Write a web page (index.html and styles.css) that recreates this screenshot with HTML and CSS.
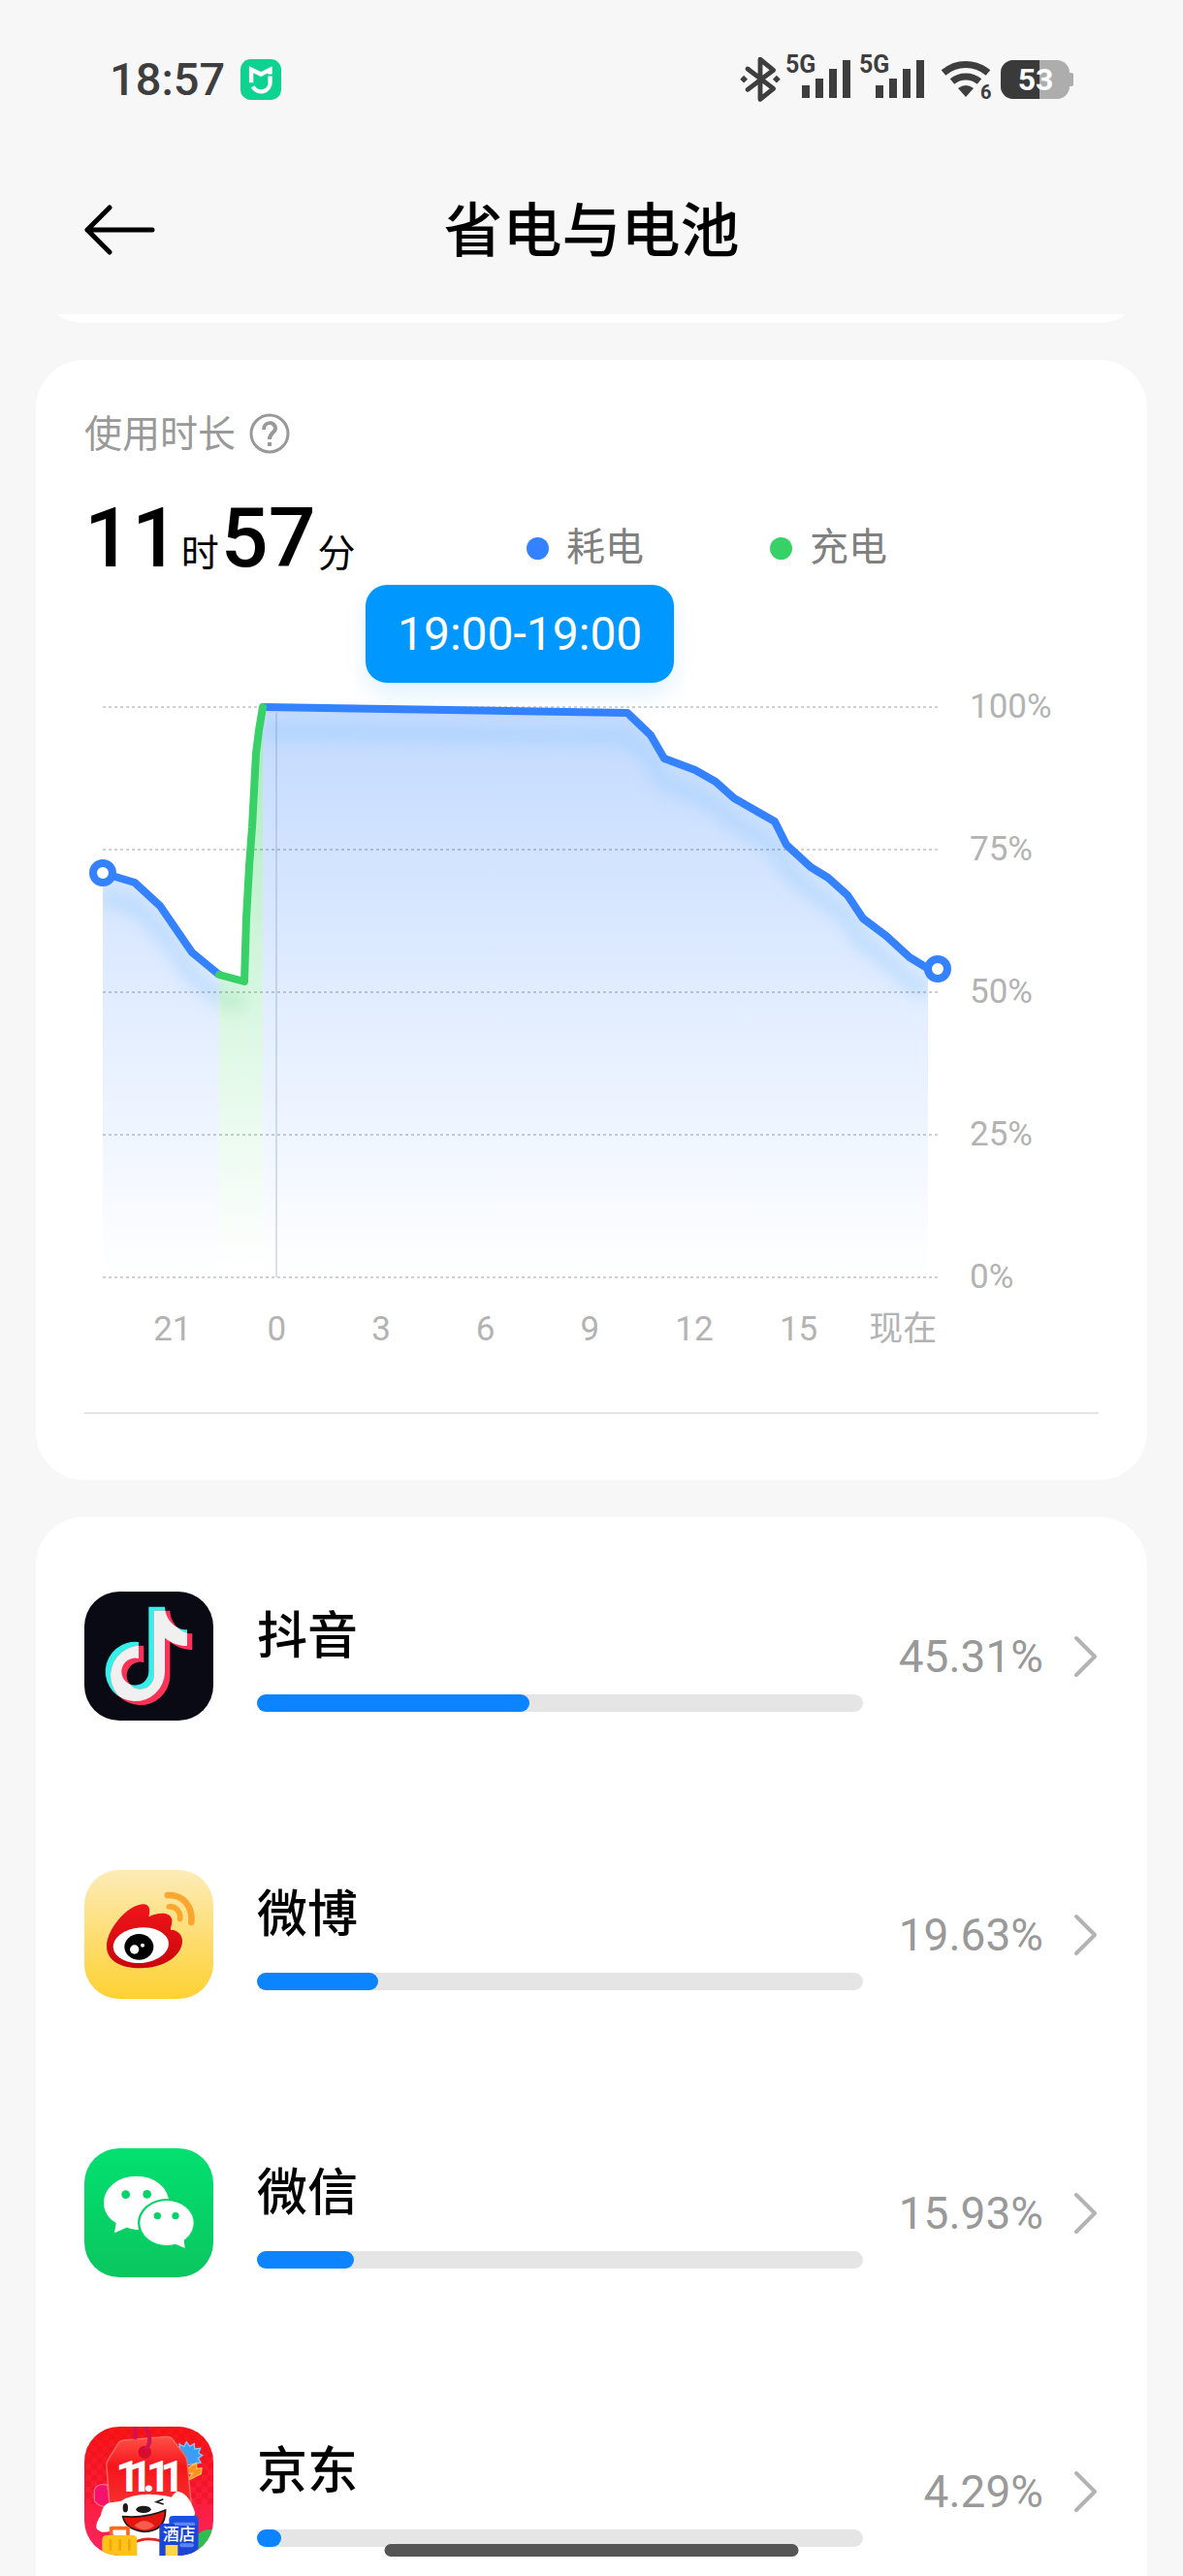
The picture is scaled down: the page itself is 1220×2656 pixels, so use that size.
FILE: index.html
```html
<!DOCTYPE html>
<html lang="zh-CN">
<head>
    <meta charset="UTF-8">
    <meta name="viewport" content="width=device-width, initial-scale=1.0">
    <title>省电与电池</title>
    <link rel="stylesheet" href="styles.css">
</head>
<body>

    <div class="status-bar">
        <span class="clock">18:57</span>
        <svg class="mi-icon" viewBox="565 96 125 125">
            <rect x="565" y="96" width="125" height="125" rx="32" fill="#0ed28f"/>
            <path d="M598 168V128L628 142L656 128V142" fill="none" stroke="#fff" stroke-width="13"/>
            <path d="M656 148V166A28 28 0 0 1 603 180" fill="none" stroke="#fff" stroke-width="13"/>
        </svg>
        <div class="status-icons">
            <svg class="bluetooth" viewBox="60 54 132 148">
                <path d="M86 94L168 157L126 191V64L168 98L86 160" fill="none" stroke="#3e3e3e" stroke-width="15" stroke-linejoin="round" stroke-linecap="round"/>
                <path d="M74 115L86 127L74 139L62 127ZM178 115L190 127L178 139L166 127Z" fill="#3e3e3e"/>
            </svg>
            <svg class="signal" viewBox="0 -10 68 70">
                <text x="0" y="18">5G</text>
                <path d="M17 31h8v13h-8zM31 24h8v20h-8zM45 14h8v30h-8zM59 5h8v39h-8z"/>
            </svg>
            <svg class="signal" viewBox="0 -10 68 70">
                <text x="0" y="18">5G</text>
                <path d="M17 31h8v13h-8zM31 24h8v20h-8zM45 14h8v30h-8zM59 5h8v39h-8z"/>
            </svg>
            <svg class="wifi" viewBox="0 -5 54 60">
                <path d="M3 18A35 35 0 0 1 49 18" fill="none" stroke="#3e3e3e" stroke-width="7"/>
                <path d="M12 27A22 22 0 0 1 40 27" fill="none" stroke="#3e3e3e" stroke-width="7"/>
                <path d="M18 34Q26 28 34 34L26 43Z" fill="#3e3e3e"/>
                <text x="41" y="45">6</text>
            </svg>
            <svg class="battery" viewBox="0 0 76 42">
                <clipPath id="cell"><rect x="0" y="1" width="71" height="40" rx="13"/></clipPath>
                <rect x="0" y="1" width="71" height="40" rx="13" fill="#adadad"/>
                <rect x="70" y="14" width="5" height="14" rx="2" fill="#adadad"/>
                <rect x="0" y="1" width="40" height="40" fill="#3a3a3a" clip-path="url(#cell)"/>
                <text x="36" y="32" text-anchor="middle">53</text>
            </svg>
        </div>
    </div>

    <header class="top-bar">
        <button class="back" aria-label="返回">
            <svg viewBox="0 0 76 56">
                <path d="M27 5L4 28L27 51M4 28H71" fill="none" stroke="#000" stroke-width="5" stroke-linecap="round" stroke-linejoin="round"/>
            </svg>
        </button>
        <h1>省电与电池</h1>
    </header>

    <div class="peek"><div class="peek-card"></div></div>

    <main>
        <section class="card usage">
            <div class="usage-title">
                <h2>使用时长</h2>
                <button class="help" aria-label="说明">
                    <svg viewBox="0 0 42 42">
                        <circle cx="21" cy="21" r="19" fill="none" stroke="#999" stroke-width="3"/>
                        <path d="M15 17C15 8 27 8 27 16C27 20 21 20 21 27" fill="none" stroke="#999" stroke-width="4"/>
                        <rect x="19" y="30" width="4" height="4" fill="#999"/>
                    </svg>
                </button>
            </div>

            <div class="summary">
                <p class="duration"><b>11</b><span>时</span><b>57</b><span>分</span></p>
                <ul class="legend">
                    <li class="drain">耗电</li>
                    <li class="charge">充电</li>
                </ul>
            </div>

            <div class="chart">
                <div class="tooltip">19:00-19:00</div>
                <svg class="plot" viewBox="0 0 861 588">
                    <defs>
                        <linearGradient id="blueFill" x1="0" y1="0" x2="0" y2="588" gradientUnits="userSpaceOnUse">
                            <stop offset="0" stop-color="#3482ff" stop-opacity=".3"/>
                            <stop offset="1" stop-color="#3482ff" stop-opacity="0"/>
                        </linearGradient>
                        <linearGradient id="greenFill" x1="0" y1="0" x2="0" y2="588" gradientUnits="userSpaceOnUse">
                            <stop offset="0" stop-color="#38d167" stop-opacity=".45"/>
                            <stop offset="1" stop-color="#5fe080" stop-opacity="0"/>
                        </linearGradient>
                        <filter id="soft" filterUnits="userSpaceOnUse" x="-40" y="-40" width="940" height="660"><feGaussianBlur stdDeviation="8"/></filter>
                        <clipPath id="under">
                            <path d="M0 171L33 181L59 205L92 253L120 276L146 283L151 164L158 48L165 0L541 6L565 29L579 53L611 65L632 77L651 94L693 118L705 142L730 165L748 176L768 194L784 218L808 236L832 258L851 269V588H0Z"/>
                        </clipPath>
                    </defs>

                    <path d="M0 171L33 181L59 205L92 253L120 276V588H0Z" fill="url(#blueFill)"/>
                    <path d="M120 276L146 283L151 164L158 48L165 0V588H120Z" fill="url(#greenFill)"/>
                    <path d="M165 0L541 6L565 29L579 53L611 65L632 77L651 94L693 118L705 142L730 165L748 176L768 194L784 218L808 236L832 258L851 269V588H165Z" fill="url(#blueFill)"/>

                    <!-- soft glow below the line -->
                    <g clip-path="url(#under)" fill="none" stroke-width="16">
                        <g filter="url(#soft)" stroke="#8ec8fb" stroke-opacity=".38">
                            <path d="M0 195L33 205L59 229L92 277L120 300"/>
                            <path d="M165 25L541 31L565 54L579 78L611 90L632 102L651 119L693 143L705 167L730 190L748 201L768 219L784 243L808 261L832 283L851 294"/>
                        </g>
                        <path d="M120 300L146 307" stroke="#7ddc9a" stroke-opacity=".3" filter="url(#soft)"/>
                    </g>

                    <path class="grid-line" d="M0 0H861M0 147H861M0 294H861M0 441H861M0 588H861"/>
                    <path d="M179 6V588" stroke="#5a78aa" stroke-opacity=".22" stroke-width="2"/>

                    <path class="line blue" d="M0 171L33 181L59 205L92 253L120 276"/>
                    <path class="line blue" d="M165 0L541 6L565 29L579 53L611 65L632 77L651 94L693 118L705 142L730 165L748 176L768 194L784 218L808 236L832 258L850 269L861 270"/>
                    <path class="line green" d="M120 276L146 283L148 218L151 164L154 124L158 48L161 24L165 0"/>
                    <circle class="dot" cx="0" cy="171" r="10"/>
                    <circle class="dot" cx="861" cy="270" r="10"/>
                </svg>
                <div class="y-axis">
                    <span>100%</span>
                    <span>75%</span>
                    <span>50%</span>
                    <span>25%</span>
                    <span>0%</span>
                </div>
                <div class="x-axis">
                    <span>21</span>
                    <span>0</span>
                    <span>3</span>
                    <span>6</span>
                    <span>9</span>
                    <span>12</span>
                    <span>15</span>
                    <span>现在</span>
                </div>
            </div>
            <hr>
        </section>

        <section class="card apps">
            <a class="app" href="#">
                <svg class="app-icon" viewBox="51 63 399 399">
                    <defs>
                        <path id="note" d="M250 110H300C302 150 332 181 369 181V231C343 231 319 222 300 206V311A92 92 0 1 1 219 219V270A42 42 0 1 0 250 311Z"/>
                        <clipPath id="noteClip"><use href="#note"/></clipPath>
                    </defs>
                    <rect x="51" y="63" width="399" height="399" fill="#090a14"/>
                    <use href="#note" fill="#32f1ea"/>
                    <use href="#note" x="16" y="12" fill="#fb3158"/>
                    <g clip-path="url(#noteClip)"><use href="#note" x="16" y="12" fill="#f0f0f0"/></g>
                </svg>
                <div class="app-info">
                    <span class="app-name">抖音</span>
                    <div class="track"><div class="fill" style="width: 45%"></div></div>
                </div>
                <span class="percent">45.31%</span>
                <svg class="chevron" viewBox="0 0 26 44"><path d="M3 3L22 22L3 41"/></svg>
            </a>

            <a class="app" href="#">
                <svg class="app-icon" viewBox="51 54 399 399">
                    <defs>
                        <linearGradient id="weiboBg" x2="0" y2="1">
                            <stop offset="0" stop-color="#fdebb8"/>
                            <stop offset="1" stop-color="#fed132"/>
                        </linearGradient>
                        <linearGradient id="weiboRed" x2="0" y2="1">
                            <stop offset="0" stop-color="#f0151b"/>
                            <stop offset="1" stop-color="#c8070b"/>
                        </linearGradient>
                    </defs>
                    <rect x="51" y="54" width="399" height="399" fill="url(#weiboBg)"/>
                    <path d="M120 290C120 240 180 166 230 160C252 158 257 176 250 199C280 184 314 184 321 205C325 220 317 230 318 239C340 240 356 255 354 277C350 325 290 358 225 358C165 358 120 335 120 290Z" fill="url(#weiboRed)"/>
                    <ellipse cx="226" cy="287" rx="86" ry="55" fill="#fff" transform="rotate(-5 226 287)"/>
                    <ellipse cx="220" cy="292" rx="45" ry="40"/>
                    <circle cx="206" cy="300" r="14" fill="#fff"/>
                    <circle cx="231" cy="287" r="6" fill="#fff"/>
                    <path d="M309 132C355 130 387 165 382 216" fill="none" stroke="#fda62e" stroke-width="20" stroke-linecap="round"/>
                    <path d="M313 168C334 166 350 184 347 206" fill="none" stroke="#fda62e" stroke-width="17" stroke-linecap="round"/>
                </svg>
                <div class="app-info">
                    <span class="app-name">微博</span>
                    <div class="track"><div class="fill" style="width: 20%"></div></div>
                </div>
                <span class="percent">19.63%</span>
                <svg class="chevron" viewBox="0 0 26 44"><path d="M3 3L22 22L3 41"/></svg>
            </a>

            <a class="app" href="#">
                <svg class="app-icon" viewBox="51 74 399 399">
                    <defs>
                        <linearGradient id="wechatBg" x2="0" y2="1">
                            <stop offset="0" stop-color="#02e06f"/>
                            <stop offset="1" stop-color="#0bc65f"/>
                        </linearGradient>
                    </defs>
                    <rect x="51" y="74" width="399" height="399" fill="url(#wechatBg)"/>
                    <path d="M150 300L144 336L182 319Z" fill="#fff"/>
                    <path d="M212 160C268 160 313 196 313 243C313 290 268 326 212 326Q194 324 178 318Q111 296 111 243C111 196 156 160 212 160Z" fill="#fff"/>
                    <ellipse cx="306" cy="305" rx="90" ry="75" fill="#06d367"/>
                    <ellipse cx="306" cy="305" rx="83" ry="69" fill="#fff"/>
                    <path d="M328 368L362 383L358 348Z" fill="#fff"/>
                    <g fill="#06d367">
                        <circle cx="179" cy="217" r="13"/>
                        <circle cx="245" cy="216" r="13"/>
                        <circle cx="277" cy="283" r="11"/>
                        <circle cx="333" cy="283" r="11"/>
                    </g>
                </svg>
                <div class="app-info">
                    <span class="app-name">微信</span>
                    <div class="track"><div class="fill" style="width: 16%"></div></div>
                </div>
                <span class="percent">15.93%</span>
                <svg class="chevron" viewBox="0 0 26 44"><path d="M3 3L22 22L3 41"/></svg>
            </a>

            <a class="app" href="#">
                <svg class="app-icon" viewBox="51 66 399 399">
                    <defs>
                        <pattern id="check" width="36" height="36" patternUnits="userSpaceOnUse">
                            <path d="M0 0h18v18h-18zM18 18h18v18h-18z" fill="#e8101f" fill-opacity=".55"/>
                        </pattern>
                        <linearGradient id="jdBg" x2="0" y2="1">
                            <stop offset="0" stop-color="#fa1411"/>
                            <stop offset="1" stop-color="#fb2560"/>
                        </linearGradient>
                        <linearGradient id="jdTag" x2="0" y2="1">
                            <stop offset="0" stop-color="#ff5148"/>
                            <stop offset=".4" stop-color="#f5151b"/>
                            <stop offset="1" stop-color="#f93434"/>
                        </linearGradient>
                    </defs>
                    <rect x="51" y="66" width="399" height="399" fill="url(#jdBg)"/>
                    <rect x="51" y="66" width="399" height="240" fill="url(#check)"/>
                    <path d="M82 262Q90 240 122 246L130 312Q100 318 82 296Z" fill="#f5126c" stroke="#fb6591" stroke-width="4"/>
                    <path d="M345 120l14 8 8-15 10 14 14-8 1 16 18-2-6 15 12 7-13 9 8 14-20 3-20 4-20-8z" fill="#3b9df5" stroke="#8cc5f5" stroke-width="4"/>
                    <path d="M398 178L372 193L368 212L386 211L368 234L412 212L414 194L398 196Z" fill="#fd9125" stroke="#ffc34d" stroke-width="4"/>
                    <path d="M155 118Q160 110 172 108L305 97Q318 96 325 106L362 155Q368 164 369 176L384 330L130 320L120 190Q119 178 124 170Z" fill="url(#jdTag)" stroke="#ff6c60" stroke-width="4"/>
                    <circle cx="238" cy="145" r="20" fill="#d80c2e"/>
                    <path d="M208 66V106M238 66Q268 110 238 140" fill="none" stroke="#d3124f" stroke-width="12"/>
                    <text class="jd-sale" x="148 186 232 242 286" y="268">11.11</text>
                    <path d="M400 400Q424 380 450 385V465H400Z" fill="#2fbf4f"/>
                    <path d="M140 300Q108 300 102 340Q86 364 88 380Q100 398 130 390Q160 420 195 465H330L380 345Q400 345 390 322Q370 268 338 266Q330 270 320 284Q220 262 164 296Z" fill="#fff"/>
                    <path d="M205 425Q240 405 290 420" fill="none" stroke="#e2231a" stroke-width="8"/>
                    <path d="M170 344Q240 350 302 324Q302 390 236 391Q178 385 170 344Z" fill="#e2160f" stroke="#1b1b1b" stroke-width="5"/>
                    <path d="M205 372Q236 344 268 372Q238 398 205 372Z" fill="#fb5a4e"/>
                    <ellipse cx="178" cy="317" rx="8" ry="14" fill="#1b1b1b"/>
                    <ellipse cx="234" cy="322" rx="23" ry="11" fill="#1b1b1b"/>
                    <path d="M295 290L274 299L296 306" fill="none" stroke="#1b1b1b" stroke-width="5"/>
                    <path d="M134 404V380H186V404" fill="none" stroke="#fb6a1c" stroke-width="11" stroke-linejoin="round"/>
                    <rect x="106" y="402" width="108" height="80" rx="14" fill="#fdc21b"/>
                    <path d="M132 418V446M161 418V446M190 418V446" stroke="#f3a500" stroke-width="8" stroke-linecap="round"/>
                    <path d="M313 354Q313 342 325 342H392Q404 342 404 354V440L386 465H313Z" fill="#1f4fe0"/>
                    <path d="M330 368H388" stroke="#5b86f5" stroke-width="12" stroke-linecap="round"/>
                    <path d="M283 378Q283 366 295 366H330V372H400V440L386 465H283Z" fill="#1c45d8"/>
                    <rect x="302" y="432" width="38" height="34" fill="#fbd648"/>
                    <path d="M352 433H384" stroke="#5b86f5" stroke-width="12" stroke-linecap="round"/>
                    <text class="jd-hotel" x="294" y="418">酒店</text>
                </svg>
                <div class="app-info">
                    <span class="app-name">京东</span>
                    <div class="track"><div class="fill" style="width: 4%"></div></div>
                </div>
                <span class="percent">4.29%</span>
                <svg class="chevron" viewBox="0 0 26 44"><path d="M3 3L22 22L3 41"/></svg>
            </a>
        </section>
    </main>

    <div class="home-indicator"></div>

</body>
</html>
```
FILE: styles.css
```css
* {
    margin: 0;
    padding: 0;
    box-sizing: border-box;
}

body {
    display: flex;
    flex-direction: column;
    min-height: 100vh;
    background: #f7f7f7;
    color: #000;
    font-family: Roboto, "Noto Sans CJK SC", sans-serif;
}

svg {
    display: block;
    flex-shrink: 0;
}

button {
    border: none;
    background: none;
    cursor: pointer;
}

/* status bar */
.status-bar {
    display: flex;
    align-items: center;
    height: 164px;
    padding: 0 112px 0 113px;
}

.clock {
    font-size: 47px;
    font-weight: 500;
    line-height: 60px;
    color: #3e3e3e;
}

.mi-icon {
    width: 42px;
    height: 42px;
    margin-left: 16px;
}

.status-icons {
    display: flex;
    align-items: center;
    gap: 8px;
    margin-left: auto;
}

.bluetooth {
    width: 44px;
    height: 48px;
    margin-right: -4px;
}

.signal {
    width: 68px;
    height: 70px;
    fill: #3e3e3e;
    font-size: 25px;
    font-weight: 700;
}

.wifi {
    width: 54px;
    height: 60px;
    margin-left: 8px;
    fill: #3e3e3e;
    font-size: 20px;
    font-weight: 700;
}

.battery {
    width: 76px;
    height: 42px;
    fill: #fff;
    font-size: 32px;
    font-weight: 700;
}

/* header */
.top-bar {
    display: grid;
    grid-template-columns: 76px 1fr 76px;
    align-items: center;
    height: 160px;
    padding: 0 86px 14px;
}

.back svg {
    width: 76px;
    height: 56px;
}

h1 {
    padding-bottom: 8px;
    text-align: center;
    font-size: 61px;
    font-weight: 500;
}

/* bottom edge of the card scrolled under the header */
.peek {
    display: flex;
    align-items: flex-end;
    height: 9px;
    margin: 0 37px 38px;
    overflow: hidden;
}

.peek-card {
    flex: 1;
    height: 110px;
    border-radius: 50px;
    background: #fff;
}

main {
    flex: 1;
    display: flex;
    flex-direction: column;
    gap: 38px;
    margin: 0 37px;
}

.card {
    border-radius: 50px;
    background: #fff;
}

/* usage card */
.usage {
    padding: 51px 50px 68px;
}

.usage-title {
    display: flex;
    align-items: center;
    gap: 14px;
    height: 50px;
}

.usage-title h2 {
    padding-bottom: 6px;
    font-size: 39px;
    font-weight: 400;
    color: #999;
}

.help svg {
    width: 42px;
    height: 42px;
}

.summary {
    display: flex;
    justify-content: space-between;
    align-items: flex-end;
    height: 104px;
    margin-top: 31px;
}

.duration {
    display: flex;
    align-items: baseline;
    line-height: 104px;
}

.duration b {
    font-size: 86px;
    font-weight: 500;
}

.duration span {
    margin: 0 2px;
    font-size: 39px;
    font-weight: 400;
    line-height: 1;
}

.legend {
    display: flex;
    gap: 130px;
    margin: 0 218px 17px 0;
    list-style: none;
    font-size: 40px;
    line-height: 50px;
    color: #808080;
}

.legend li {
    display: flex;
    align-items: center;
    gap: 18px;
}

.legend li::before {
    content: "";
    width: 23px;
    height: 23px;
    border-radius: 50%;
    background: #3482ff;
}

.legend .charge::before {
    background: #38d167;
}

.chart {
    position: relative;
    display: grid;
    grid-template-columns: 1fr 133px;
    column-gap: 33px;
    row-gap: 33px;
    margin: 122px 0 64px 19px;
    font-size: 35px;
    line-height: 42px;
    color: #b3b3b3;
}

.plot {
    width: 100%;
    overflow: visible;
}

.grid-line {
    stroke: #000;
    stroke-opacity: .18;
    stroke-width: 2;
    stroke-dasharray: 3 3;
}

.line {
    fill: none;
    stroke-width: 8;
    stroke-linejoin: round;
}

.blue {
    stroke: #3482ff;
}

.green {
    stroke: #38d167;
    stroke-linecap: round;
}

.dot {
    fill: #fff;
    stroke: #3482ff;
    stroke-width: 8;
}

.y-axis {
    display: flex;
    flex-direction: column;
    justify-content: space-between;
    margin: -21px 0;
}

.x-axis {
    display: grid;
    grid-template-columns: repeat(8, 1fr);
    margin: 0 -18px 0 18px;
    text-align: center;
}

/* sits over the top of the chart */
.tooltip {
    position: absolute;
    top: -126px;
    left: 271px;
    padding: 0 33px;
    border-radius: 22px;
    background: #0098ff;
    box-shadow: 0 12px 24px rgba(0, 152, 255, .12);
    color: #fff;
    font-size: 48px;
    line-height: 101px;
    white-space: nowrap;
}

hr {
    height: 2px;
    border: none;
    background: #e5e5e5;
}

/* app list */
.apps {
    flex: 1;
    display: flex;
    flex-direction: column;
    gap: 154px;
    padding: 77px 50px 20px;
    border-radius: 50px 50px 0 0;
}

.app {
    display: flex;
    align-items: center;
    color: inherit;
    text-decoration: none;
}

.app-icon {
    width: 133px;
    height: 133px;
    border-radius: 36px;
}

.jd-sale {
    fill: #fff;
    font-size: 132px;
    font-weight: 700;
}

.jd-hotel {
    fill: #fff;
    font-size: 50px;
    font-weight: 500;
}

.app-info {
    flex: 1;
    margin-left: 45px;
}

.app-name {
    display: block;
    font-size: 52px;
    font-weight: 500;
    line-height: 76px;
    margin-bottom: 21px;
}

.track {
    height: 18px;
    border-radius: 9px;
    background: #e5e5e5;
}

.fill {
    height: 18px;
    border-radius: 9px;
    background: #0d84ff;
}

.percent {
    width: 186px;
    text-align: right;
    font-size: 46px;
    color: #999;
}

.chevron {
    width: 26px;
    height: 44px;
    margin-left: 31px;
    fill: none;
    stroke: #b3b3b3;
    stroke-width: 4;
    stroke-linecap: round;
    stroke-linejoin: round;
}

.home-indicator {
    position: fixed;
    bottom: 20px;
    left: 50%;
    width: 35%;
    height: 13px;
    border-radius: 7px;
    background: #555;
    transform: translateX(-50%);
}
```
